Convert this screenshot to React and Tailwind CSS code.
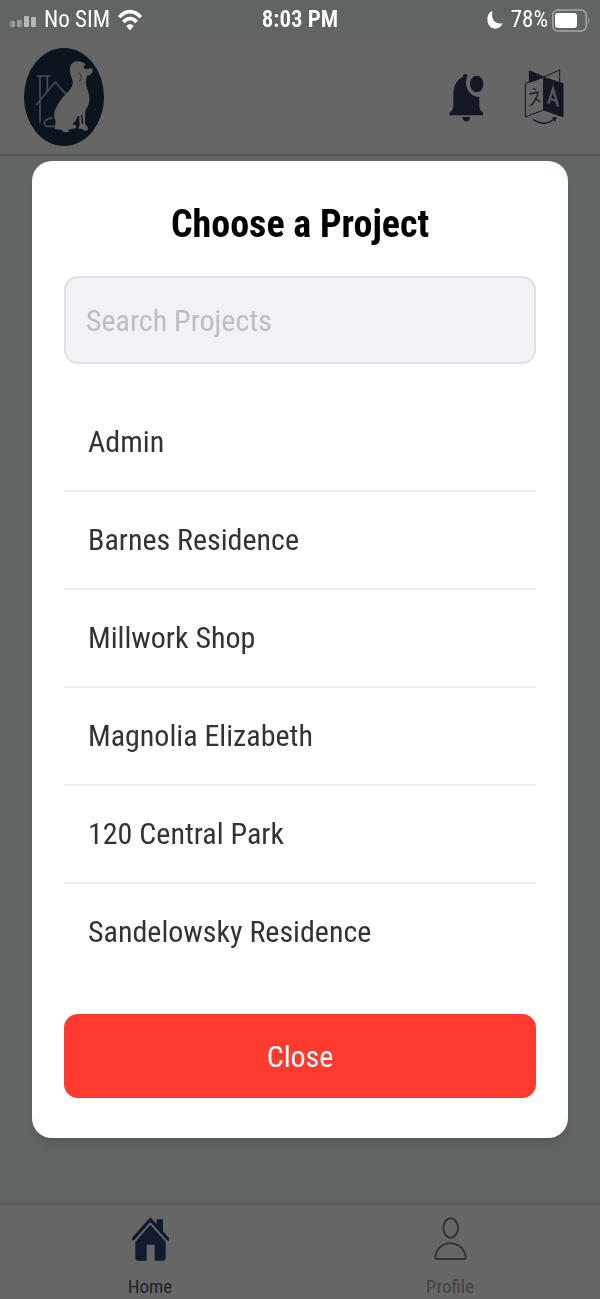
const projects = [
  'Admin',
  'Barnes Residence',
  'Millwork Shop',
  'Magnolia Elizabeth',
  '120 Central Park',
  'Sandelowsky Residence',
];

function StatusBar() {
  return (
    <div className="relative z-20 grid h-10 grid-cols-3 items-center px-[10px] text-[23px] leading-10 text-white">
      <div className="flex items-center gap-2">
        <svg className="h-[14px] w-[26px]" viewBox="0 0 26 14" fill="#fff" aria-hidden="true">
          <rect x="0" y="8" width="5" height="6" rx="1" opacity=".35" />
          <rect x="7" y="7" width="5" height="7" rx="1" opacity=".35" />
          <rect x="14" y="3" width="5" height="11" rx="1" opacity=".55" />
          <rect x="21" y="4" width="5" height="10" rx="1" opacity=".55" />
        </svg>
        <span>No SIM</span>
        <svg className="h-[22px] w-6" viewBox="0 0 24 22" fill="none" stroke="#fff" strokeWidth="3.6" aria-hidden="true">
          <path d="M1.3 8.2C7.5.7 16.5.7 22.7 8.2" />
          <path d="M5.4 13C9.3 8.3 14.7 8.3 18.6 13" />
          <path d="M8.3 17C10.3 14.5 13.7 14.5 15.7 17L12 21.5Z" fill="#fff" stroke="none" />
        </svg>
      </div>
      <span className="text-center font-semibold">8:03 PM</span>
      <div className="flex items-center justify-end gap-1">
        <svg className="mr-1 h-5 w-4" viewBox="0 0 16 20" fill="#fff" aria-hidden="true">
          <path d="M5.6 1C.8 2.7-.4 8 .8 12.5 3.3 20.8 13 20.6 15.7 13 8.8 15.500 3.2 9.400 5.6 1Z" />
        </svg>
        <span>78%</span>
        <svg className="h-[23px] w-[38px]" viewBox="0 0 38 23" fill="none" aria-hidden="true">
          <rect x=".8" y="1" width="33.4" height="21" rx="5" stroke="#a5a7a7" strokeWidth="1.5" />
          <rect x="3" y="4" width="22" height="15" rx="3" fill="#fff" />
          <path d="M36 8Q38 11.500 36 15Z" fill="#a5a7a7" />
        </svg>
      </div>
    </div>
  );
}

function Logo() {
  return (
    <svg className="h-[98px] w-20" viewBox="73 144 240 294" fill="none" role="img" aria-label="Company logo">
      <ellipse cx="193" cy="291" rx="120" ry="147" fill="#1c3048" />
      <g stroke="#b4bac0" strokeWidth="5">
        <path d="M110 228H153M121 230V368M143 230V274" />
        <path d="M109 315L167 246L200 284" />
        <path d="M160 355C138 352 126 372 140 379H170" />
      </g>
      <path
        fill="#f2f3f4"
        d="M233 184C218 184 210 196 211 210C210 222 216 232 219 243C220 254 217 263 208 272C190 290 173 311 166 331C161 344 164 354 168 364L166 388L184 389L194 397L208 396L206 389L229 384V376L217 373C226 367 231 358 234 348H238L240 374L236 386L248 387L256 393L264 389L264 381L256 373L257 330C266 319 271 306 269 290C267 274 259 262 259 248C259 240 260 232 264 226H274L272 220L279 218V206L270 205L262 208L253 205L252 198L258 194C252 187 243 184 233 184Z"
      />
      <path d="M237 218C247 225 246 239 237 246" stroke="#69798a" strokeWidth="3" />
      <path d="M246 346L249 372" stroke="#1c3048" strokeWidth="4" />
    </svg>
  );
}

function BellIcon() {
  return (
    <svg className="h-[49px] w-[35px]" viewBox="145 219 105 147" fill="#323c5c" aria-hidden="true">
      <path d="M187 230C187 222 194 220 201 224C191 246 195 287 236 291V320Q237 329 247 338V346H146V338Q158 330 158 318V282C158 256 170 239 187 230Z" />
      <ellipse cx="228" cy="252" rx="20" ry="25" />
      <path d="M185 351H208Q206 365 197 365Q188 365 185 351Z" />
    </svg>
  );
}

function TranslateIcon() {
  return (
    <svg className="h-14 w-10" viewBox="371 206 120 168" fill="none" stroke="#323c5c" strokeWidth="3" aria-hidden="true">
      <path d="M387 211L430 230L387 246Z" fill="#323c5c" />
      <path d="M430 230L478 209V247" />
      <path d="M375 249L430 231V329L375 350Z" />
      <path d="M430 231L488 250V349L430 329Z" fill="#323c5c" />
      <path d="M398 264L407 269M388 281L413 275C412 290 402 308 389 317M403 294C409 294 413 303 420 305" strokeWidth="4" />
      <path d="M444 310L458 265L473 318M449 296L468 302" stroke="#d8dbe3" strokeWidth="7" />
      <path d="M398 357Q433 382 465 354M454 354L466 352L464 363" strokeWidth="4" />
    </svg>
  );
}

function HomeIcon() {
  return (
    <svg className="h-11 w-[37px]" viewBox="396 292 111 132" fill="#2a4478" aria-hidden="true">
      <path d="M451 293L470 313V299H489V335L507 355V363L501 362L451 307L402 362L396 361V354Z" />
      <path d="M451 315L497 366V415Q497 423 490 423H464V375H440V423H413Q406 423 406 415V366Z" />
    </svg>
  );
}

function ProfileIcon() {
  return (
    <svg className="h-11 w-[33px]" viewBox="401 292 99 132" fill="none" stroke="#808080" strokeWidth="6" aria-hidden="true">
      <ellipse cx="451" cy="325" rx="22" ry="29" />
      <path d="M409 418Q404 418 405 411C413 357 487 357 496 411Q497 418 491 418Z" />
    </svg>
  );
}

export default function App() {
  return (
    <div className="flex min-h-screen flex-col bg-[#f1f9fa] font-['Roboto_Condensed',Roboto,sans-serif]">
      <StatusBar />
      <header className="flex h-[116px] items-center justify-between border-b-2 border-[#d8d8d8] bg-white pr-9 pl-6">
        <Logo />
        <div className="flex items-center gap-10">
          <button type="button" aria-label="Notifications"><BellIcon /></button>
          <button type="button" aria-label="Change language"><TranslateIcon /></button>
        </div>
      </header>
      <main className="flex-1" />
      <nav className="grid h-24 grid-cols-2 border-t-2 border-[#dcdcdc] bg-white text-[19px] leading-6">
        <a href="#home" className="flex flex-col items-center gap-[14px] pt-3 text-[#4c5668]">
          <HomeIcon />
          Home
        </a>
        <a href="#profile" className="flex flex-col items-center gap-[14px] pt-3 text-[#a8a8a8]">
          <ProfileIcon />
          Profile
        </a>
      </nav>

      <div className="fixed inset-0 z-10 flex items-center justify-center bg-black/60 px-8">
        <section
          role="dialog"
          aria-modal="true"
          aria-labelledby="dialog-title"
          className="w-full rounded-[20px] bg-white px-8 py-10 shadow-lg"
        >
          <h1 id="dialog-title" className="mb-7 text-center text-[38px] leading-[47px] font-bold text-black">
            Choose a Project
          </h1>
          <input
            type="search"
            aria-label="Search Projects"
            placeholder="Search Projects"
            className="block h-[88px] w-full rounded-[14px] border-2 border-[#e0e1e3] bg-[#f0f2f6] px-5 text-[30px] text-[#333] placeholder:text-[#bdbec2]"
          />
          <ul className="mt-[30px] divide-y-2 divide-[#f0f0f0] text-[30px] leading-10 text-[#333]">
            {projects.map((name) => (
              <li key={name}>
                <button type="button" className="block h-24 w-full px-6 text-left">{name}</button>
              </li>
            ))}
          </ul>
          <button type="button" className="mt-[34px] block h-[84px] w-full rounded-[14px] bg-[#ff3b30] text-[30px] text-white">
            Close
          </button>
        </section>
      </div>
    </div>
  );
}
